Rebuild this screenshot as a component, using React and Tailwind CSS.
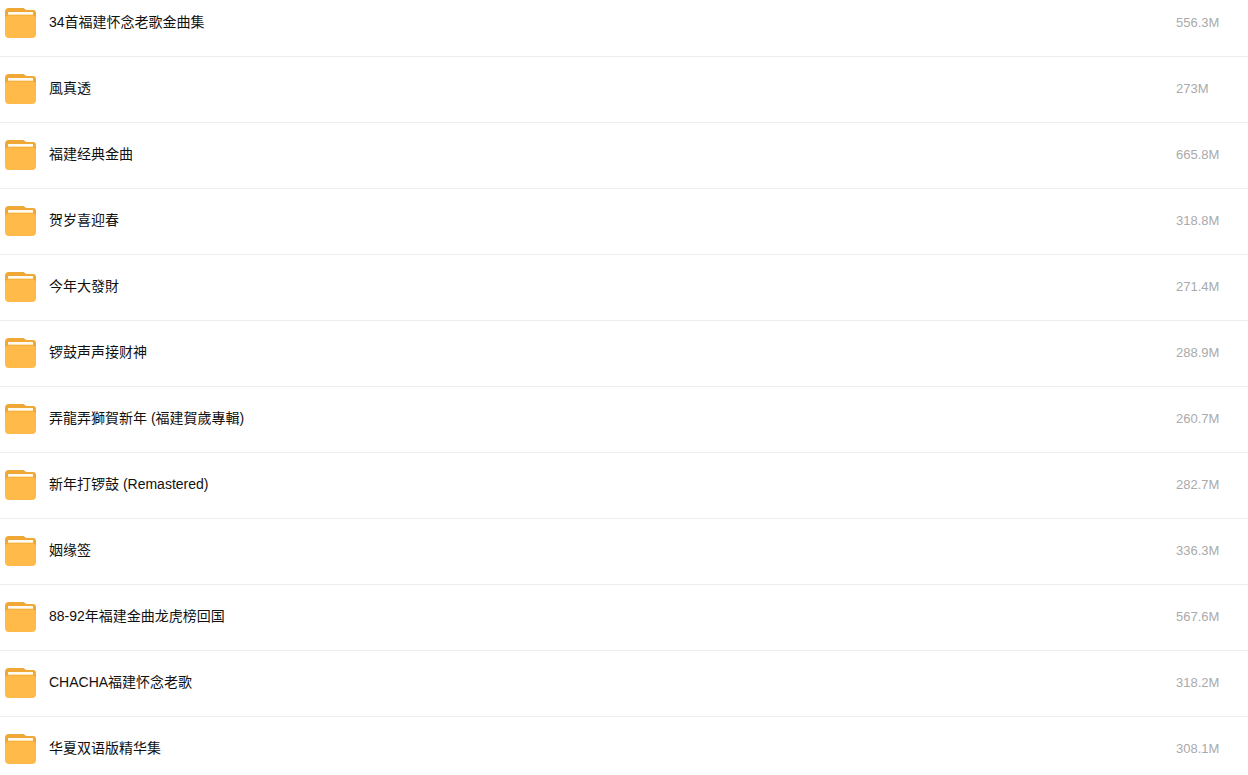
import React from "react";

const folders = [
  { name: "34首福建怀念老歌金曲集", size: "556.3M" },
  { name: "風真透", size: "273M" },
  { name: "福建经典金曲", size: "665.8M" },
  { name: "贺岁喜迎春", size: "318.8M" },
  { name: "今年大發財", size: "271.4M" },
  { name: "锣鼓声声接财神", size: "288.9M" },
  { name: "弄龍弄獅賀新年 (福建賀歲專輯)", size: "260.7M" },
  { name: "新年打锣鼓 (Remastered)", size: "282.7M" },
  { name: "姻缘签", size: "336.3M" },
  { name: "88-92年福建金曲龙虎榜回国", size: "567.6M" },
  { name: "CHACHA福建怀念老歌", size: "318.2M" },
  { name: "华夏双语版精华集", size: "308.1M" },
];

const FolderIcon = () => (
  <svg className="h-[30px] w-[31px] shrink-0" viewBox="0 0 31 30" aria-hidden="true">
    {/* Back of the folder with its tab */}
    <path
      d="M0 4a4 4 0 0 1 4-4h13.5c1.2 0 1.8.5 2.5 1.2.6.6 1.2.8 2 .8h6a3 3 0 0 1 3 3v8H0z"
      fill="#efa835"
    />
    {/* Front */}
    <path d="M0 11a3.5 3.5 0 0 1 3.5-3.5h24A3.5 3.5 0 0 1 31 11v15a4 4 0 0 1-4 4H4a4 4 0 0 1-4-4z" fill="#ffba49" />
    {/* Paper edge */}
    <rect x="3" y="4" width="25" height="3" rx="0.5" fill="#ffe3b3" />
    <rect x="3" y="4" width="25" height="2" rx="0.5" fill="#fffaf0" />
  </svg>
);

const App = () => {
  return (
    <main className="h-screen overflow-hidden bg-white font-['Liberation_Sans','Noto_Sans_CJK_SC',sans-serif]">
      <table className="w-full border-collapse">
        <tbody>
          {folders.map((folder) => (
            <tr key={folder.name} className="group border-b border-[#ededed]">
              <td className="pt-[17px] pb-[18px] pl-[5px] group-first:pt-2">
                <a href="#" className="flex items-center gap-[13px] text-[#111111]">
                  <FolderIcon />
                  <span className="pb-0.5 text-[14px] leading-5">{folder.name}</span>
                </a>
              </td>
              <td className="w-[72px] pt-[17px] pb-[18px] text-[13px] leading-5 text-[#aaaaaa] group-first:pt-2">
                {folder.size}
              </td>
            </tr>
          ))}
        </tbody>
      </table>
    </main>
  );
};

export default App;
